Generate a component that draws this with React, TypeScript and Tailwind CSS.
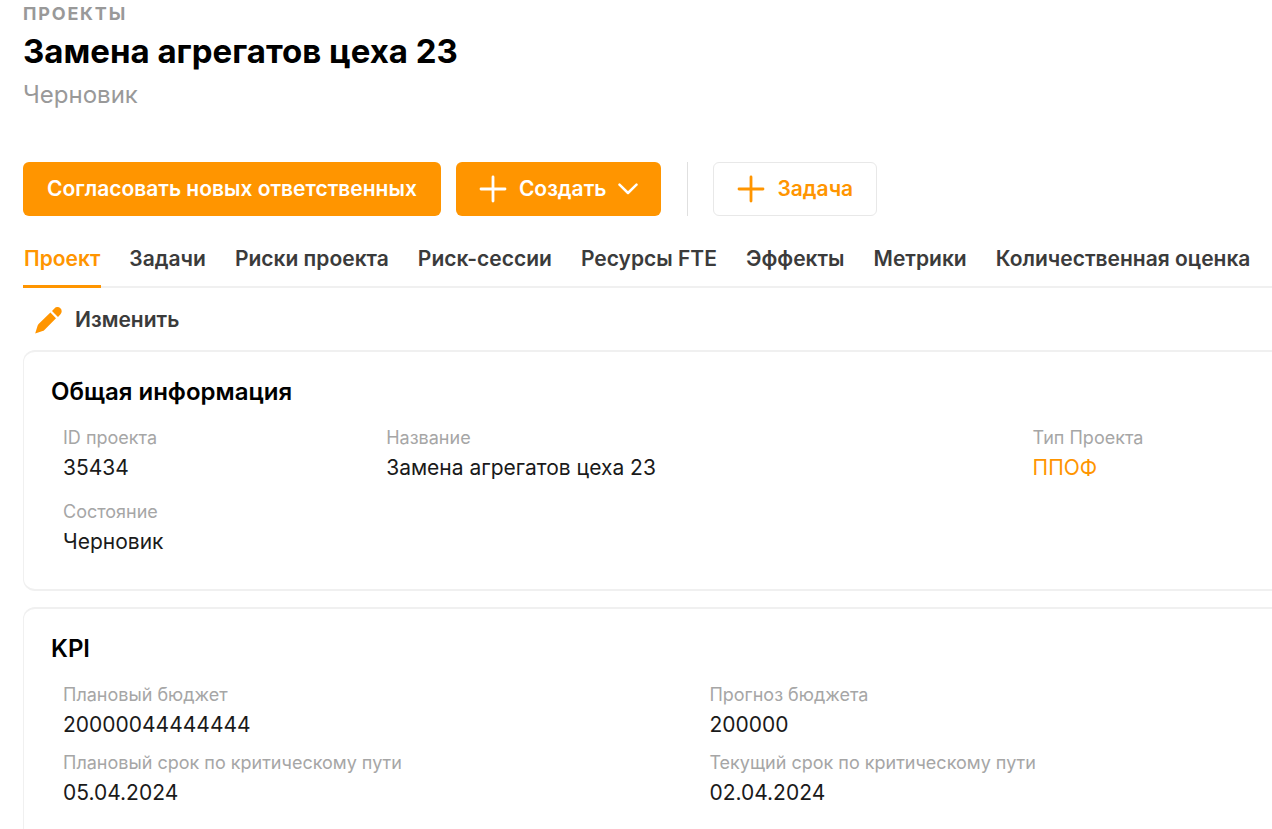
import type { ReactNode } from "react";

const tabs = [
  "Проект",
  "Задачи",
  "Риски проекта",
  "Риск-сессии",
  "Ресурсы FTE",
  "Эффекты",
  "Метрики",
  "Количественная оценка",
];

function PlusIcon() {
  return (
    <svg viewBox="0 0 28 28" className="size-7 shrink-0" fill="none" stroke="currentColor" strokeWidth="2.8" strokeLinecap="round" aria-hidden="true">
      <path d="M14 2v24M2 14h24" />
    </svg>
  );
}

function ChevronIcon() {
  return (
    <svg viewBox="0 0 20 12" className="h-3 w-5 shrink-0" fill="none" stroke="currentColor" strokeWidth="2.5" strokeLinecap="round" strokeLinejoin="round" aria-hidden="true">
      <path d="M1.500 1.700 10 10l8.500-8.300" />
    </svg>
  );
}

function PencilIcon() {
  return (
    <svg viewBox="0 0 28 28" className="size-7 shrink-0" fill="currentColor" aria-hidden="true">
      <path d="M15.400 6.400 21 12.200 9.400 23.900Q8.600 24.700 7.600 25L.2 27.400 2.500 20Q2.800 18.900 3.600 18.100Z" />
      <path d="M17 4.900 19.400 2.400A4.200 4.200 0 0 1 25.500 8.300L23 10.900Z" />
    </svg>
  );
}

function Field({ label, children }: { label: string; children: ReactNode }) {
  return (
    <div>
      <dt className="text-lg leading-6 text-[#a6a6a6]">{label}</dt>
      <dd className="mt-1 text-[21px] leading-7 text-[#1a1a1a]">{children}</dd>
    </div>
  );
}

function Card({ title, children }: { title: string; children: ReactNode }) {
  return (
    <section className="rounded-l-xl border-y-2 border-l border-[#f0f0f0] pt-6 pb-[33px] pl-[27px]">
      <h2 className="text-2xl leading-8 font-semibold text-black">{title}</h2>
      <div className="mt-[18px] pl-3">{children}</div>
    </section>
  );
}

export default function App() {
  return (
    <main className="min-h-screen overflow-hidden bg-white pt-1 pl-[23px] font-['Inter','Liberation_Sans',sans-serif]">
      <header>
        <p className="text-lg leading-5 font-bold tracking-widest text-[#999999] uppercase">Проекты</p>
        <h1 className="mt-[7px] text-[33px] leading-10 font-bold text-black">Замена агрегатов цеха 23</h1>
        <p className="mt-1.5 text-2xl leading-9 text-[#999999]">Черновик</p>
      </header>

      <div className="mt-[49px] flex items-center">
        <button type="button" className="h-[54px] rounded-md bg-[#ff9500] px-6 text-[21px] font-semibold whitespace-nowrap text-white">
          Согласовать новых ответственных
        </button>
        <button type="button" className="ml-[15px] flex h-[54px] items-center gap-3 rounded-md bg-[#ff9500] px-[23px] text-[21px] font-semibold whitespace-nowrap text-white">
          <PlusIcon />
          Создать
          <ChevronIcon />
        </button>
        <span className="mr-[25px] ml-[26px] h-[54px] w-px bg-[#e0e0e0]" />
        <button type="button" className="flex h-[54px] items-center gap-3 rounded-md border border-[#e8e8e8] px-[23px] text-[21px] font-semibold whitespace-nowrap text-[#ff9500]">
          <PlusIcon />
          Задача
        </button>
      </div>

      <nav className="mt-4 border-b-2 border-[#f0f0f0]">
        <ul className="flex gap-[27px]">
          {tabs.map((tab, i) => (
            <li key={tab}>
              <a
                href="#"
                className={
                  i === 0
                    ? "-mb-0.5 block h-14 border-b-3 border-[#ff9500] px-px pt-[11px] text-[21px] leading-8 font-semibold whitespace-nowrap text-[#ff9500]"
                    : "block px-px pt-[11px] text-[21px] leading-8 font-semibold whitespace-nowrap text-[#3b3b3b]"
                }
              >
                {tab}
              </a>
            </li>
          ))}
        </ul>
      </nav>

      <div className="flex h-[62px] items-center pt-0.5 pl-3">
        <button type="button" className="flex items-center gap-3 text-[21px] leading-8 font-semibold text-[#3b3b3b]">
          <span className="text-[#ff9500]"><PencilIcon /></span>
          Изменить
        </button>
      </div>

      <div className="flex flex-col gap-4">
        <Card title="Общая информация">
          <dl className="grid grid-cols-[27fr_27fr_27fr_20fr] gap-y-[18px]">
            <Field label="ID проекта">35434</Field>
            <div className="col-span-2">
              <Field label="Название">Замена агрегатов цеха 23</Field>
            </div>
            <Field label="Тип Проекта">
              <a href="#" className="text-[#ff9500]">ППОФ</a>
            </Field>
            <Field label="Состояние">Черновик</Field>
          </dl>
        </Card>
        <Card title="KPI">
          <dl className="grid grid-cols-[54fr_47fr] gap-y-3">
            <Field label="Плановый бюджет">20000044444444</Field>
            <Field label="Прогноз бюджета">200000</Field>
            <Field label="Плановый срок по критическому пути">05.04.2024</Field>
            <Field label="Текущий срок по критическому пути">02.04.2024</Field>
          </dl>
        </Card>
      </div>
    </main>
  );
}
